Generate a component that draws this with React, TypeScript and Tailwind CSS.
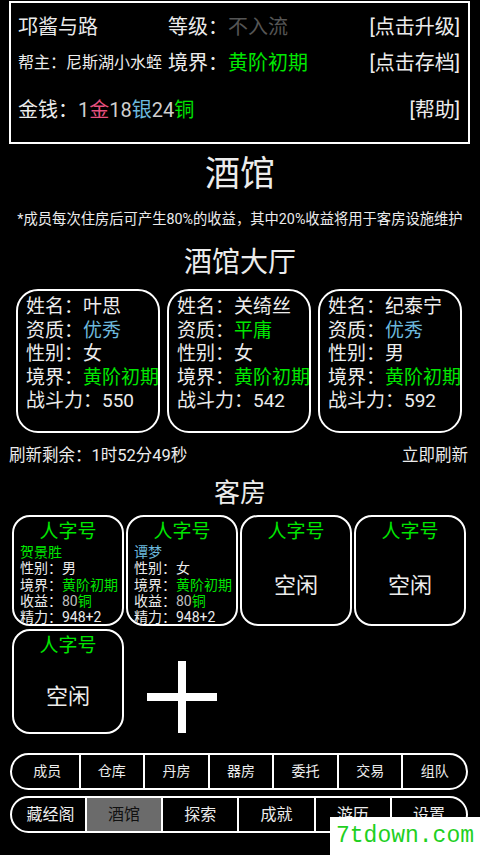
import React from "react";

const green = "text-[#00e600]";
const blue = "text-[#6cb8dc]";

const hall = [
  { name: "叶思", quality: "优秀", qc: blue, sex: "女", power: 550 },
  { name: "关绮丝", quality: "平庸", qc: green, sex: "女", power: 542 },
  { name: "纪泰宁", quality: "优秀", qc: blue, sex: "男", power: 592 },
];

const rooms = [
  { name: "贺景胜", nc: green, sex: "男" },
  { name: "谭梦", nc: blue, sex: "女" },
  null,
  null,
];

const nav1 = ["成员", "仓库", "丹房", "器房", "委托", "交易", "组队"];
const nav2 = ["藏经阁", "酒馆", "探索", "成就", "游历", "设置"];

const RoomCard = ({ guest, tall }: { guest: (typeof rooms)[number]; tall?: boolean }) => (
  <div
    className={`flex flex-col overflow-hidden rounded-[18px] border-2 border-white ${
      tall ? "h-[111px]" : "h-[105px]"
    }`}
  >
    <div className={`pt-[3px] text-center text-[19px] leading-[24px] ${green}`}>人字号</div>
    {guest ? (
      <div className="pl-[6px] text-[14px] leading-[16.3px] whitespace-nowrap">
        <div className={guest.nc}>{guest.name}</div>
        <div>
          性别：<span>{guest.sex}</span>
        </div>
        <div>
          境界：<span className={green}>黄阶初期</span>
        </div>
        <div>
          收益：<span className="text-[#bdbdbd]">80</span>
          <span className={green}>铜</span>
        </div>
        <div>
          精力：<span>948+2</span>
        </div>
      </div>
    ) : (
      <div className="flex flex-1 items-center justify-center pt-[3px] text-[22px]">空闲</div>
    )}
  </div>
);

export default function App() {
  return (
    <div
      className="relative min-h-[855px] w-[480px] overflow-hidden bg-black text-[#ececec]"
      style={{ fontFamily: 'Roboto, "Noto Sans CJK SC", sans-serif' }}
    >
      {/* status box */}
      <div className="ml-[9px] mt-px h-[143px] w-[461px] border-2 border-white pl-[7px] pr-[8px]">
        <div className="flex h-[48px] items-center text-[20px]">
          <span className="w-[150px]">邛酱与路</span>
          <span>等级：</span>
          <span className="text-[#555555]">不入流</span>
          <span className="ml-auto">[点击升级]</span>
        </div>
        <div className="flex h-[24px] items-center">
          <span className="w-[150px] text-[16px]">帮主：尼斯湖小水蛭</span>
          <span className="text-[20px]">境界：</span>
          <span className={`text-[20px] ${green}`}>黄阶初期</span>
          <span className="ml-auto text-[20px]">[点击存档]</span>
        </div>
        <div className="mt-[15px] flex h-[40px] items-center text-[20px]">
          <span>金钱：</span>
          <span className="text-[#cfcfcf]">1</span>
          <span className="text-[#e6507f]">金</span>
          <span className="text-[#cfcfcf]">18</span>
          <span className={blue}>银</span>
          <span className="text-[#cfcfcf]">24</span>
          <span className={green}>铜</span>
          <span className="ml-auto">[帮助]</span>
        </div>
      </div>

      <div className="flex h-[62px] items-center justify-center text-[35px]">酒馆</div>
      <div className="flex h-[28px] items-center justify-center text-[14.3px]">
        *成员每次住房后可产生80%的收益，其中20%收益将用于客房设施维护
      </div>
      <div className="mt-[4px] flex h-[50px] items-center justify-center text-[28px]">酒馆大厅</div>

      {/* hall */}
      <div className="mt-px grid grid-cols-[repeat(3,144px)] gap-x-[7px] pl-[16px]">
        {hall.map((p) => (
          <div
            key={p.name}
            className="h-[144px] overflow-hidden rounded-[22px] border-2 border-white pl-[8px] pt-[4px] text-[19px] leading-[23.5px] whitespace-nowrap"
          >
            <div>姓名：{p.name}</div>
            <div>
              资质：<span className={p.qc}>{p.quality}</span>
            </div>
            <div>性别：{p.sex}</div>
            <div>
              境界：<span className={green}>黄阶初期</span>
            </div>
            <div>战斗力：{p.power}</div>
          </div>
        ))}
      </div>

      <div className="mt-[3px] flex h-[40px] items-center justify-between pl-[9px] pr-[12px] text-[16.5px]">
        <span>刷新剩余：1时52分49秒</span>
        <span>立即刷新</span>
      </div>
      <div className="flex h-[34px] items-center justify-center text-[26px]">客房</div>

      {/* rooms */}
      <div className="mt-[5px] grid grid-cols-[repeat(4,112px)] gap-x-[2px] gap-y-[3px] pl-[12px]">
        {rooms.map((r, i) => (
          <RoomCard key={i} guest={r} tall />
        ))}
        <RoomCard guest={null} />
        <div className="flex h-[105px] items-start justify-center pt-[32px]">
          <svg width="70" height="72" viewBox="0 0 70 72">
            <rect x="31" y="0" width="8" height="72" fill="#fff" />
            <rect x="0" y="32" width="70" height="8" fill="#fff" />
          </svg>
        </div>
      </div>

      {/* nav */}
      <div className="ml-[10px] mt-[19px] flex h-[37px] w-[458px] overflow-hidden rounded-full border-2 border-white text-[14px]">
        {nav1.map((n, i) => (
          <div
            key={n}
            className={`flex flex-1 items-center justify-center ${i > 0 ? "border-l-2 border-white" : "pl-[4px]"}`}
          >
            {n}
          </div>
        ))}
      </div>
      <div className="ml-[10px] mt-[6px] flex h-[37px] w-[458px] overflow-hidden rounded-full border-2 border-white text-[16px]">
        {nav2.map((n, i) => (
          <div
            key={n}
            className={`flex items-center justify-center ${
              i === 0 ? "w-[73px] pl-[4px]" : "flex-1 border-l-2 border-white"
            } ${n === "酒馆" ? "bg-[#6b6b6b] text-[#111]" : ""}`}
          >
            {n}
          </div>
        ))}
      </div>

      {/* watermark */}
      <div className="absolute bottom-0 right-0 flex h-[38px] w-[150px] items-center justify-center bg-white">
        <span
          className="text-[23px] text-[#1fd01f]"
          style={{ fontFamily: '"Liberation Mono", monospace' }}
        >
          7tdown.com
        </span>
      </div>
    </div>
  );
}
